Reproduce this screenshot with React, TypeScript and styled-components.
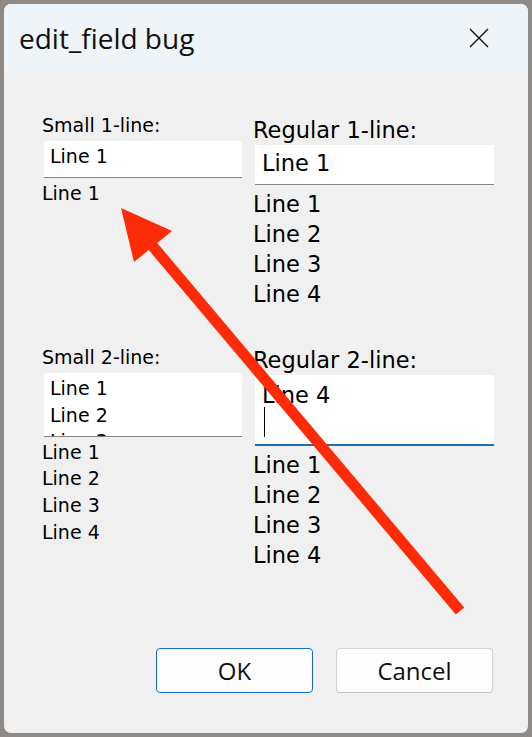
import React from "react";
import styled, { createGlobalStyle } from "styled-components";

type Size = "small" | "regular";

interface FieldSpec {
  label: string;
  size: Size;
  top: number;
  boxHeight: number;
  boxLines: string[];
  below: string[];
  focused?: boolean;
}

const FOUR = ["Line 1", "Line 2", "Line 3", "Line 4"];

const fields: FieldSpec[] = [
  { label: "Small 1-line:", size: "small", top: 0, boxHeight: 37, boxLines: ["Line 1"], below: ["Line 1"] },
  { label: "Small 2-line:", size: "small", top: 0, boxHeight: 64, boxLines: ["Line 1", "Line 2", "Line 3"], below: FOUR },
  { label: "Regular 1-line:", size: "regular", top: 3, boxHeight: 40, boxLines: ["Line 1"], below: FOUR },
  { label: "Regular 2-line:", size: "regular", top: 1, boxHeight: 71, boxLines: ["Line 4"], below: FOUR, focused: true },
];

const sizes = {
  small: { font: 19, line: 26.67, boxGap: 2.33, belowGap: 1.5, padTop: 2, padLeft: 6, width: 198 },
  regular: { font: 22.5, line: 30, boxGap: 0, belowGap: 3.5, padTop: 3, padLeft: 7, width: 239 },
};

const GlobalStyle = createGlobalStyle`
  html, body {
    margin: 0;
    padding: 0;
    background: #8f8a86;
  }
  * {
    box-sizing: border-box;
  }
`;

const Desktop = styled.div`
  position: relative;
  width: 532px;
  height: 737px;
  padding: 3px 0 0 3px;
  overflow: hidden;
`;

const Window = styled.div`
  width: 526px;
  height: 731px;
  border: 1px solid #8a8a8a;
  border-radius: 8px;
  overflow: hidden;
  display: flex;
  flex-direction: column;
  background: #f0f0f0;
`;

const TitleBar = styled.div`
  height: 68px;
  flex-shrink: 0;
  display: flex;
  align-items: center;
  justify-content: space-between;
  padding: 0 39px 0 15px;
  background: #eff4f9;
`;

const TitleText = styled.span`
  font-family: "Open Sans", "Noto Sans", sans-serif;
  font-size: 28px;
  line-height: 38px;
  color: #111;
`;

const CloseIcon = styled.svg`
  width: 20px;
  height: 20px;
  display: block;
`;

const Content = styled.div`
  flex: 1;
  display: flex;
  flex-direction: column;
  padding: 40px 35px 40px 38px;
`;

const FieldGrid = styled.div`
  display: grid;
  grid-template-columns: 211px 241px;
  grid-template-rows: 232px auto;
  grid-auto-flow: column;
  align-items: start;
`;

const Section = styled.div<{ $top: number }>`
  margin-top: ${(p) => p.$top}px;
  display: flex;
  flex-direction: column;
`;

const TextLine = styled.div<{ $size: Size }>`
  font-family: "DejaVu Sans", "Liberation Sans", sans-serif;
  font-size: ${(p) => sizes[p.$size].font}px;
  line-height: ${(p) => sizes[p.$size].line}px;
  color: #000;
  white-space: nowrap;
`;

const Label = styled(TextLine)`
  line-height: ${(p) => (p.$size === "small" ? 26.67 : 30)}px;
`;

const EditBox = styled.div<{ $size: Size; $height: number; $focused?: boolean }>`
  margin-top: ${(p) => sizes[p.$size].boxGap}px;
  margin-left: 2px;
  width: ${(p) => sizes[p.$size].width}px;
  height: ${(p) => p.$height}px;
  padding: ${(p) => (p.$focused ? 5 : sizes[p.$size].padTop)}px 0 0 ${(p) => sizes[p.$size].padLeft}px;
  background: #fff;
  border-bottom: ${(p) => (p.$focused ? "2px solid #1b6fb2" : "1px solid #858585")};
  overflow: hidden;
`;

const Caret = styled.div`
  width: 1px;
  height: 30px;
  margin: -3px 0 0 1.5px;
  background: #000;
`;

const BelowLines = styled.div<{ $size: Size }>`
  margin-top: ${(p) => sizes[p.$size].belowGap}px;
  display: flex;
  flex-direction: column;
`;

const ButtonRow = styled.div`
  margin-top: auto;
  display: flex;
  justify-content: flex-end;
  gap: 23px;
`;

const DialogButton = styled.button<{ $primary?: boolean }>`
  width: 157px;
  height: 45px;
  padding: 0;
  border-radius: 4px;
  border: 1px solid ${(p) => (p.$primary ? "#1170c4" : "#d3d3d3")};
  border-bottom-color: ${(p) => (p.$primary ? "#1170c4" : "#c4c4c4")};
  background: #fdfdfd;
  font-family: "Open Sans", "Noto Sans", sans-serif;
  font-size: 24px;
  color: #111;
`;

const Overlay = styled.svg`
  position: absolute;
  left: 0;
  top: 0;
  pointer-events: none;
`;

const Field = ({ spec }: { spec: FieldSpec }) => (
  <Section $top={spec.top}>
    <Label $size={spec.size}>{spec.label}</Label>
    <EditBox $size={spec.size} $height={spec.boxHeight} $focused={spec.focused}>
      {spec.boxLines.map((line, i) => (
        <TextLine key={i} $size={spec.size}>
          {line}
        </TextLine>
      ))}
      {spec.focused && <Caret />}
    </EditBox>
    <BelowLines $size={spec.size}>
      {spec.below.map((line) => (
        <TextLine key={line} $size={spec.size}>
          {line}
        </TextLine>
      ))}
    </BelowLines>
  </Section>
);

const App = () => {
  return (
    <>
      <GlobalStyle />
      <Desktop>
        <Window>
          <TitleBar>
            <TitleText>edit_field bug</TitleText>
            <CloseIcon viewBox="0 0 20 20">
              <path d="M1 1 L19 19 M19 1 L1 19" stroke="#111" strokeWidth="1.4" fill="none" />
            </CloseIcon>
          </TitleBar>
          <Content>
            <FieldGrid>
              {fields.map((f) => (
                <Field key={f.label} spec={f} />
              ))}
            </FieldGrid>
            <ButtonRow>
              <DialogButton $primary>OK</DialogButton>
              <DialogButton>Cancel</DialogButton>
            </ButtonRow>
          </Content>
        </Window>
        {/* red annotation arrow drawn over the dialog */}
        <Overlay width="532" height="737" viewBox="0 0 532 737">
          <line x1="150" y1="243" x2="460" y2="611" stroke="#fd2b08" strokeWidth="11" />
          <polygon points="121,208 172,231 134,262" fill="#fd2b08" />
        </Overlay>
      </Desktop>
    </>
  );
};

export default App;
